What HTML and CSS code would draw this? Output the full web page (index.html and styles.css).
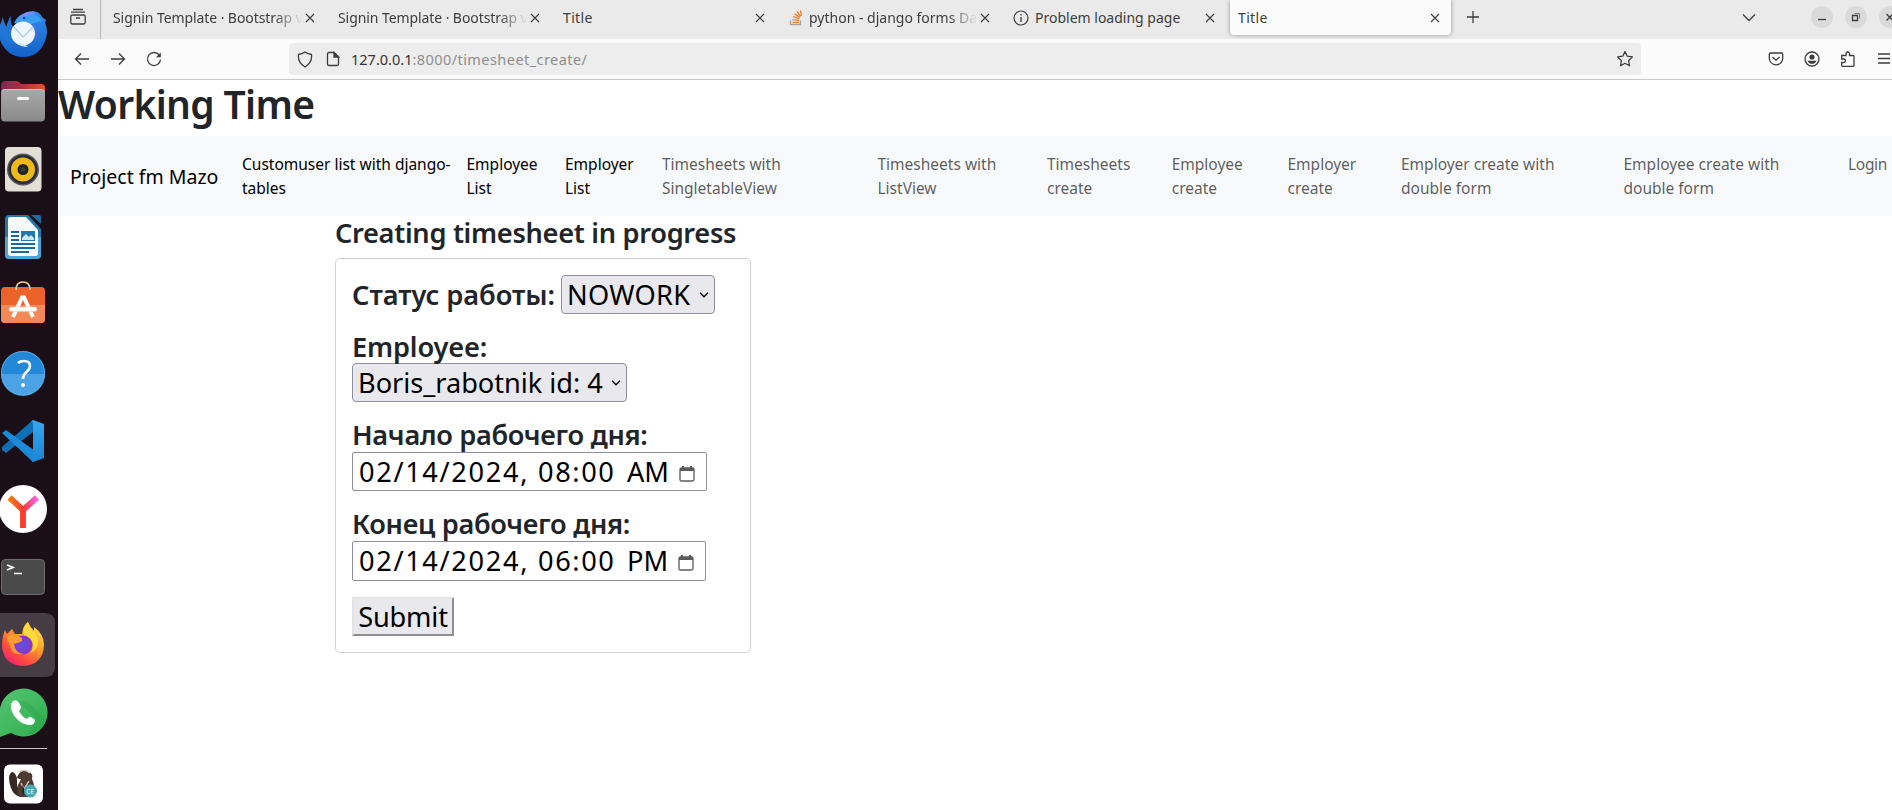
FILE: index.html
```
<!DOCTYPE html>
<html lang="en">
<head>
<meta charset="utf-8">
<title>Title</title>
<link rel="stylesheet" href="styles.css">
</head>
<body>
<svg class="defs" aria-hidden="true">
  <defs>
    <linearGradient id="gBird" x1="0" y1="0" x2="0" y2="1"><stop offset="0" stop-color="#2f8cec"/><stop offset="1" stop-color="#1460c8"/></linearGradient>
    <linearGradient id="gFolderBack"><stop offset="0" stop-color="#7a2a56"/><stop offset=".5" stop-color="#a8343f"/><stop offset="1" stop-color="#e0562a"/></linearGradient>
    <linearGradient id="gFolder" x1="0" y1="0" x2="0" y2="1"><stop offset="0" stop-color="#a9a9a9"/><stop offset="1" stop-color="#8a8a8a"/></linearGradient>
    <linearGradient id="gCode" x1="0" y1="0" x2="0" y2="1"><stop offset="0" stop-color="#37a8f0"/><stop offset="1" stop-color="#1a87d6"/></linearGradient>
    <linearGradient id="gYa"><stop offset="0" stop-color="#ff7a12"/><stop offset=".5" stop-color="#fb3a34"/><stop offset="1" stop-color="#fb62e8"/></linearGradient>
    <linearGradient id="gFox" x1=".9" y1="0" x2=".2" y2="1"><stop offset="0" stop-color="#fff04a"/><stop offset=".4" stop-color="#ffa02b"/><stop offset=".75" stop-color="#ff4a40"/><stop offset="1" stop-color="#ee1f78"/></linearGradient>
    <linearGradient id="gGreen" x1="0" y1="0" x2="1" y2="1"><stop offset="0" stop-color="#55c371"/><stop offset="1" stop-color="#2fae4e"/></linearGradient>
    <radialGradient id="gGlobe"><stop offset="0" stop-color="#5b54e0"/><stop offset="1" stop-color="#8a35c8"/></radialGradient>
    <symbol id="x" viewBox="0 0 10 10"><path d="M1 1l8 8M9 1l-8 8"/></symbol>
  </defs>
</svg>
<div class="desktop">
  <aside class="dock">
    <svg viewBox="0 -1 58 68"><path d="M0 25Q2 22 3 19Q7 15 11 15Q9 23 14 28L20 18Q24 11 33 11Q40 12 42 17L46 20L45 23Q49 31 45 41Q39 57 23 57Q7 57 0 40Z" fill="url(#gBird)"/><path d="M0 0H12V15Q7 22 7 27Q2 24 3 17Q1 20 0 25Z" fill="#1a0f17"/><path d="M3 17Q4 24 7 27Q7 22 11 15Q9 23 13 31L12 44Q3 40 0 33V25Q2 20 3 17Z" fill="#2275d6"/><path d="M14 23Q19 13 27 13Q32 13 36 15L43 21Q35 22 32 24L20 24Z" fill="#3c9df5"/><path d="M19 19Q24 11 30 12Q34 12 36 14Q27 14 19 19Z" fill="#8588f5"/><path d="M30 22Q36 24 37 32Q38 40 33 45Q38 40 36 30Q34 24 30 22Z" fill="#7a6ae0"/><circle cx="23" cy="33.500" r="12" fill="#eef6fd"/><path d="M17 43Q24 43 28 47Q20 47 17 43Z" fill="#cfe6f8"/><path d="M14 27L23 37L33 27" fill="none" stroke="#aecfe9" stroke-width="1.400"/><circle cx="24" cy="18" r="1.300" fill="#174a94"/></svg>
    <svg viewBox="0 67 58 68"><path d="M1 86Q1 81 5 81H16Q19 81 21 84H41Q45 84 45 88V101H1Z" fill="url(#gFolderBack)"/><rect x="1" y="89" width="44" height="32.500" rx="4" fill="url(#gFolder)"/><path d="M2 91Q3 89.500 5 89.500H41Q43 89.500 44 91" fill="none" stroke="#c9c9c9"/><rect x="17" y="97" width="12" height="3" rx="1.500" fill="#fff"/></svg>
    <svg viewBox="0 135 58 68"><rect x="5" y="147" width="36.500" height="44.500" rx="4" fill="#e3dfd5"/><circle cx="23" cy="169.500" r="16" fill="#55575c"/><circle cx="23" cy="169.500" r="14.500" fill="#292b33"/><circle cx="23" cy="169.500" r="12" fill="#f0b91a"/><circle cx="23" cy="169.500" r="5.500" fill="#222"/><circle cx="23" cy="169.500" r="2.500" fill="#3b3b3b"/></svg>
    <svg viewBox="0 203 58 68"><path d="M5 219Q5 215 9 215H28L41 229V255Q41 259 37 259H9Q5 259 5 255Z" fill="#1f78b0"/><path d="M8 219Q8 217 10 217H26L38 230V254Q38 256 36 256H10Q8 256 8 254Z" fill="#f7fafc"/><path d="M5 237H8V256H38V237H41V255Q41 259 37 259H9Q5 259 5 255Z" fill="#4ba6d8"/><path d="M31 215H39Q41 215 41 217V224Z" fill="#1d6c9f"/><path d="M11 232H19M11 236H19M11 240H19M11 244H35M11 248H35M11 252H29" stroke="#186b9f" stroke-width="1.900"/><rect x="21" y="231" width="14" height="10" fill="#1f78b0"/><path d="M22 240V238L26 234L29 237L31 235L34 238V240Z" fill="#cfe5f2"/></svg>
    <svg viewBox="0 271 58 68"><rect x="1" y="287" width="44" height="36" rx="4" fill="#ec6229"/><path d="M1 305H45V319Q45 323 41 323H5Q1 323 1 319Z" fill="#f18a58"/><path d="M16 290Q16 282 23 282Q30 282 30 290" fill="none" stroke="#f2d39b" stroke-width="1.700"/><path d="M13 317L22 297.500H24L33 317" fill="none" stroke="#fff" stroke-width="4"/><rect x="9" y="307" width="28" height="4.500" rx="2.200" fill="#fff" stroke="#f3b89b" stroke-width=".5"/></svg>
    <svg viewBox="0 339 58 68"><circle cx="23" cy="373" r="22" fill="#2388d8"/><path d="M1 374H45A22 22 0 0 1 1 374Z" fill="#4ba3e5"/><circle cx="23" cy="373" r="21.500" fill="none" stroke="#58a9e2"/><path d="M18 363Q20 361 24 361Q30 361 30 366Q30 369 26.500 372Q23 375 23 379" fill="none" stroke="#fff" stroke-width="2.600"/><circle cx="23" cy="385" r="2" fill="#fff"/></svg>
    <svg viewBox="0 407 58 68"><path d="M33 420V432L6 453L2 450V447Z" fill="#0f6fb4"/><path d="M2 433L6 430L35 451L33 462Z" fill="#1c8ad8"/><path d="M33 420L44 424V458L33 462L31 460Q33 461 33 458V424Q33 421 31 422Z" fill="url(#gCode)"/></svg>
    <svg viewBox="0 475 58 68"><circle cx="23" cy="509" r="24" fill="#fff"/><path d="M9.500 497.500L23 510V528M23 510L37 497.500" fill="none" stroke="url(#gYa)" stroke-width="6"/></svg>
    <svg viewBox="0 543 58 68"><rect x="1.500" y="559.500" width="43" height="35" rx="4" fill="#4a4a4a" stroke="#6d6d6d"/><path d="M7 565L13 567.500L7 570M14 573.500H22" fill="none" stroke="#fff" stroke-width="1.700"/></svg>
    <svg viewBox="0 611 58 68"><path d="M0 613H45Q55 613 55 623V667Q55 677 45 677H0Z" fill="#463c43"/><path d="M5 630L7 634L12 629L15 634H22Q23 625 28 622Q30 627 34 631V627Q44 634 44 645Q43 665 23 666Q4 665 2 647Q2 640 3 636Z" fill="url(#gFox)"/><circle cx="23" cy="645" r="9.500" fill="url(#gGlobe)"/><path d="M7 636Q14 633 22 638L22 641Q19 643 14 644Q15 653 23 654Q11 656 10 645Q7 641 7 636Z" fill="#ff9b2f"/><path d="M28 622Q22 628 24 635Q31 637 33 643Q34 649 30 653Q38 650 38 642Q38 636 34 632Q29 627 28 622Z" fill="#ffd83d"/></svg>
    <svg viewBox="0 679 58 68"><path d="M0 708A24 24 0 1 1 11 733Q5 735 0 737Z" fill="url(#gGreen)"/><path d="M19 702L36 719Q31 725 29 735Q42 731 46 719L26 701Z" fill="#249c43" opacity=".3"/><path d="M13 701Q17 699 19 703L21 707Q21 709 19 711Q22 717 27 719Q29 716 31 717L35 720Q35 725 30 725Q22 725 16 718Q10 711 11 704Z" fill="#fff"/></svg>
    <div class="dock-line"></div>
    <svg viewBox="0 749 58 61" class="last"><rect x="4" y="764.500" width="39" height="39" rx="6" fill="#fff"/><path d="M9 777Q10 772 13 772Q18 775 17 785L21 797Q14 796 11 788Q9 783 9 777Z" fill="#372824"/><path d="M17 777Q21 769 27 771Q34 773 32 779Q36 787 33 797H20Q16 790 18 785L21 779Q17 779 17 777Z" fill="#4f3a31"/><path d="M19 772Q25 768 30 773M21 783L24 789L29 781" fill="none" stroke="#d8cbc0" stroke-width="1.400"/><path d="M22 785L25 790L23 796Z" fill="#241917"/><circle cx="30.500" cy="791" r="6.500" fill="#46a9b3"/><text x="26.300" y="793.500" class="ce">CE</text></svg>
  </aside>

  <main class="window">
    <div class="tabs">
      <div class="recent"><svg class="ico" width="18" height="18" viewBox="0 0 18 18"><path d="M4 1.500H14M2 4.200H16M3.500 7H14.500Q16.200 7 16.200 8.500V14.500Q16.200 16 14.500 16H3.500Q1.800 16 1.800 14.500V8.500Q1.800 7 3.500 7M7 10H11"/></svg></div>
      <div class="tab"><span class="label fade tight">Signin Template · Bootstrap v</span><svg class="close"><use href="#x"/></svg></div>
      <div class="tab"><span class="label fade tight">Signin Template · Bootstrap v</span><svg class="close"><use href="#x"/></svg></div>
      <div class="tab"><span class="label title">Title</span><svg class="close"><use href="#x"/></svg></div>
      <div class="tab"><svg class="fav" width="16" height="16" viewBox="0 0 16 16"><path d="M1.500 10.500V14.500H11.500V10.500" fill="none" stroke="#a0a4a8" stroke-width="1.300"/><path d="M3.500 12.300H10M3.500 9.700L10 10.400M4 6.700L10.200 8.600M5.500 3.900L10.800 7.400M8 1.500L11.700 6.400M11.300 .5L12.500 5.500" stroke="#f48024" stroke-width="1.300"/></svg><span class="label fade">python - django forms Da</span><svg class="close"><use href="#x"/></svg></div>
      <div class="tab"><svg class="fav info" width="16" height="16" viewBox="0 0 16 16"><circle cx="8" cy="8" r="7" fill="none" stroke="#3d3d3d" stroke-width="1.200"/><path d="M8 7V12M8 4V5.500" stroke="#3d3d3d" stroke-width="1.300"/></svg><span class="label">Problem loading page</span><svg class="close"><use href="#x"/></svg></div>
      <div class="tab active"><span class="label title">Title</span><svg class="close"><use href="#x"/></svg></div>
      <svg class="ico plus" width="14" height="14" viewBox="0 0 14 14"><path d="M7 1V13M1 7H13"/></svg>
      <div class="controls">
        <svg class="ico chev" width="14" height="9" viewBox="0 0 14 9"><path d="M1 1.500L7 7.500L13 1.500"/></svg>
        <span class="round"><svg class="ico" width="22" height="22" viewBox="0 0 22 22"><path d="M7 13.500H15"/></svg></span>
        <span class="round"><svg class="ico" width="22" height="22" viewBox="0 0 22 22"><path d="M7.500 9.500H12.500V14.500H7.500Z"/><path d="M9.500 7.500H14.500V12.500" stroke="#777" stroke-width="1"/></svg></span>
        <span class="round"><svg class="ico" width="22" height="22" viewBox="0 0 22 22"><path d="M7.500 8L14 14.500M14 8L7.500 14.500"/></svg></span>
      </div>
    </div>

    <div class="toolbar">
      <div class="history">
        <svg class="ico" width="16" height="16" viewBox="0 0 16 16"><path d="M15 8H1.500M7 2.500L1.500 8L7 13.500"/></svg>
        <svg class="ico" width="16" height="16" viewBox="0 0 16 16"><path d="M1 8H14.500M9 2.500L14.500 8L9 13.500"/></svg>
        <svg class="ico" width="16" height="16" viewBox="0 0 16 16"><path d="M13.500 4.500A6.500 6.500 0 1 0 14.500 8.500"/><path d="M14.800 1.500V6.300H10Z" fill="#3d3d3d" stroke="none"/></svg>
      </div>
      <div class="urlbar">
        <svg class="ico" width="16" height="17" viewBox="0 0 16 17"><path d="M8 1Q11 3 14.500 3.500Q15.500 11.500 8 16Q.5 11.500 1.500 3.500Q5 3 8 1Z"/></svg>
        <svg class="ico page" width="14" height="16" viewBox="0 0 14 16"><path d="M3 1.500H8L12.500 6V13Q12.500 14.500 11 14.500H3Q1.500 14.500 1.500 13V3Q1.500 1.500 3 1.500Z"/><path d="M8 1.500V6H12.500Z" fill="#3d3d3d"/></svg>
        <span class="url"><b>127.0.0.1</b><i>:8000/timesheet_create/</i></span>
        <svg class="ico star" width="18" height="18" viewBox="0 0 18 18"><path d="M9 1.500L11.200 6.200L16.400 6.900L12.600 10.500L13.500 15.800L9 13.300L4.500 15.800L5.400 10.500L1.600 6.900L6.800 6.200Z" stroke-linejoin="round"/></svg>
      </div>
      <div class="tools">
        <svg class="ico" width="16" height="16" viewBox="0 0 16 16"><path d="M2.500 2H13.500Q14.700 2 14.700 3.500V7.500Q14 13.500 8 13.800Q2 13.500 1.300 7.500V3.500Q1.300 2 2.500 2ZM4.500 6L8 9.200L11.500 6"/></svg>
        <svg class="ico" width="16" height="16" viewBox="0 0 16 16"><circle cx="8" cy="8" r="7"/><circle cx="8" cy="6" r="2.600" fill="#3d3d3d" stroke="none"/><path d="M3.500 9.700H12.500Q11.500 12.800 8 12.800Q4.500 12.800 3.500 9.700Z" fill="#3d3d3d" stroke="none"/></svg>
        <svg class="ico" width="16" height="16" viewBox="0 0 16 16"><path d="M1.700 4.500H6V2.500Q6.200 1 7.700 1Q9.300 1 9.500 2.500V4.500H13Q14 4.500 14 5.500V14.500Q14 15.300 13 15.300H2.500Q1.700 15.300 1.700 14.500V11.500H4Q5.500 11.200 5.500 9.800Q5.500 8.300 4 8H1.700Z"/></svg>
        <svg class="ico" width="16" height="16" viewBox="0 0 16 16"><path d="M2 3H14M2 7.500H14M2 12H14"/></svg>
      </div>
    </div>

    <div class="page-body">
      <h1>Working Time</h1>
      <nav class="navbar">
        <a class="brand">Project fm Mazo</a>
        <a class="on">Customuser list with django-tables</a>
        <a class="on">Employee List</a>
        <a class="on">Employer List</a>
        <a>Timesheets with SingletableView</a>
        <a>Timesheets with ListView</a>
        <a>Timesheets create</a>
        <a>Employee create</a>
        <a>Employer create</a>
        <a class="wide">Employer create with double form</a>
        <a class="wide">Employee create with double form</a>
        <a class="login">Login</a>
      </nav>
      <section class="form-area">
        <h2>Creating timesheet in progress</h2>
        <div class="card">
          <div class="row inline"><label class="l-status">Статус работы:</label><div class="select status"><span>NOWORK</span><svg class="caret" viewBox="0 0 10 6"><path d="M1 .8L5 4.800L9 .8"/></svg></div></div>
          <div class="row"><label class="l-employee">Employee:</label><div class="select employee"><span>Boris_rabotnik id: 4</span><svg class="caret" viewBox="0 0 10 6"><path d="M1 .8L5 4.800L9 .8"/></svg></div></div>
          <div class="row"><label class="l-start">Начало рабочего дня:</label><div class="date"><span class="d">02/14/2024,</span><span class="t">08:00</span><span class="ap">AM</span><svg class="cal" viewBox="0 0 16 17"><path d="M1 4.500Q1 3 2.500 3H13.500Q15 3 15 4.500V14.500Q15 16 13.500 16H2.500Q1 16 1 14.500Z" fill="none" stroke="#5b5b5b" stroke-width="1.300"/><path d="M1 3H15V6H1ZM3 1H5V4H3ZM11 1H13V4H11Z" fill="#5b5b5b"/></svg></div></div>
          <div class="row"><label class="l-end">Конец рабочего дня:</label><div class="date end"><span class="d">02/14/2024,</span><span class="t">06:00</span><span class="ap">PM</span><svg class="cal" viewBox="0 0 16 17"><path d="M1 4.500Q1 3 2.500 3H13.500Q15 3 15 4.500V14.500Q15 16 13.500 16H2.500Q1 16 1 14.500Z" fill="none" stroke="#5b5b5b" stroke-width="1.300"/><path d="M1 3H15V6H1ZM3 1H5V4H3ZM11 1H13V4H11Z" fill="#5b5b5b"/></svg></div></div>
          <button class="submit">Submit</button>
        </div>
      </section>
    </div>
  </main>
</div>
</body>
</html>
```
FILE: styles.css
```
* { box-sizing: border-box; }
body { margin: 0; font-family: "Noto Sans", "Open Sans", sans-serif; color: #212529; background: #fff; overflow: hidden; }
.defs { position: absolute; width: 0; height: 0; }
.desktop { display: flex; width: 1892px; height: 810px; overflow: hidden; }

.dock { width: 58px; flex: none; background: #1a0f17; display: flex; flex-direction: column; }
.dock svg { display: block; width: 58px; height: 68px; flex: none; }
.dock svg:first-child { margin-top: -1px; }
.dock svg.last { height: 61px; }
.dock-line { width: 47px; height: 1px; margin: 1px 0 0; background: #c9c5c8; flex: none; }
.ce { font-size: 6.500px; fill: #fff; }

.window { width: 1834px; flex: none; display: flex; flex-direction: column; }
.ico { fill: none; stroke: #3d3d3d; stroke-width: 1.300; display: block; flex: none; }

.tabs { height: 39px; background: #eaeaea; display: flex; flex: none; }
.recent { width: 43px; border-right: 1px solid #b9b9b9; padding: 8px 0 0 11px; }
.tab { width: 225px; height: 35px; display: flex; align-items: center; padding: 0 11px 0 12px; font-size: 14px; color: #3d3d3d; flex: none; }
.tab .label { flex: 1; min-width: 0; white-space: nowrap; overflow: hidden; line-height: 35px; }
.tab .fade { margin-right: 3px; -webkit-mask-image: linear-gradient(90deg, #000 calc(100% - 28px), transparent); mask-image: linear-gradient(90deg, #000 calc(100% - 28px), transparent); }
.tab .tight { letter-spacing: -.08px; }
.tab .title { letter-spacing: .35px; }
.close { width: 10px; height: 10px; fill: none; stroke: #3d3d3d; stroke-width: 1.100; flex: none; }
.fav { margin: 0 4px 0 1px; flex: none; }
.fav.info { margin: 0 6px 0 0; }
.tab.active { width: 221px; margin-left: 4px; padding-left: 8px; background: #fbfbfb; border-radius: 0 0 4px 4px; box-shadow: 0 0 4px rgba(0,0,0,.38); }
.plus { margin: 10px 0 0 15px; }
.controls { display: flex; margin-left: auto; width: 150px; padding-top: 6px; }
.chev { margin: 7px 55px 0 0; }
.round { width: 22px; height: 22px; border-radius: 50%; background: #dadada; margin-right: 12px; flex: none; }

.toolbar { height: 41px; flex: none; background: #fbfbfb; border-bottom: 1px solid #c8c8c8; display: flex; align-items: center; }
.history { display: flex; gap: 20px; padding-left: 16px; width: 231px; }
.urlbar { width: 1352px; height: 32px; border-radius: 4px; background: #ededed; display: flex; align-items: center; padding: 0 7px 0 8px; }
.urlbar .page { margin-left: 13px; }
.url { margin-left: 11px; font-size: 14.500px; line-height: 32px; white-space: nowrap; }
.url b { font-weight: 400; color: #333; }
.url i { font-style: normal; color: #8d8d8d; letter-spacing: .44px; }
.star { margin-left: auto; }
.tools { display: flex; gap: 20px; margin-left: 127px; }

.page-body { flex: 1; }
h1 { margin: 0 0 8px; font-size: 39px; line-height: 48px; font-weight: 600; letter-spacing: -.65px; }
.navbar { height: 80px; background: #f8f9fa; display: grid; grid-template-columns: 172px 224.500px 98.500px 97px 215.500px 169.500px 124.700px 115.800px 113.500px 222.500px 224.500px auto; padding: 16px 0 16px 12px; font-size: 15.500px; line-height: 24px; color: rgba(0,0,0,.65); }
.navbar a { padding-right: 14px; letter-spacing: 0; }
.navbar a.wide { padding-right: 50px; }
.navbar a.on { color: #000; }
.navbar .brand { font-size: 19.500px; line-height: 49px; color: #000; white-space: nowrap; padding: 0; }
.navbar .login { padding: 0; letter-spacing: -.3px; }

.form-area { width: 416px; margin-left: 277px; }
h2 { margin: 0 0 8px; font-size: 27.200px; line-height: 34px; font-weight: 600; letter-spacing: -.3px; white-space: nowrap; }
.card { height: 395px; border: 1px solid #d0d1d2; border-radius: 5px; padding: 16px; font-size: 27.200px; line-height: 34px; }
.row { margin-bottom: 16px; }
.row.inline { display: flex; align-items: center; }
label { display: block; font-weight: 600; letter-spacing: -.3px; white-space: nowrap; }
.l-status { width: 209px; letter-spacing: -.05px; }
.l-employee { line-height: 33px; letter-spacing: -.15px; }
.select { height: 39px; border: 1px solid #8f8f9d; border-radius: 4px; background: #e9e9ed; color: #000; display: flex; align-items: center; justify-content: space-between; padding: 0 5px; line-height: 36px; white-space: nowrap; }
.status { width: 154px; letter-spacing: .3px; }
.employee { width: 275px; letter-spacing: -.03px; }
.caret { width: 10px; height: 6px; fill: none; stroke: #000; stroke-width: 1.300; }
.date { width: 355px; height: 39px; border: 1px solid #8f8f9d; border-radius: 2px; color: #000; display: flex; align-items: center; padding-left: 6px; line-height: 36px; white-space: nowrap; }
.date.end { width: 354px; height: 40px; }
.date .d { width: 179px; letter-spacing: 1.650px; }
.date .t { width: 89px; letter-spacing: 1.600px; }
.date .ap { width: 52px; }
.date.end .ap { width: 51px; }
.cal { width: 16px; height: 17px; margin-top: 3px; }
.submit { display: block; width: 102px; height: 39px; margin: 0; padding: 0; border: 2px outset #e3e3e3; background: #e9e9ed; color: #000; font: 400 27.200px/34px "Noto Sans", sans-serif; letter-spacing: -.2px; }
```
